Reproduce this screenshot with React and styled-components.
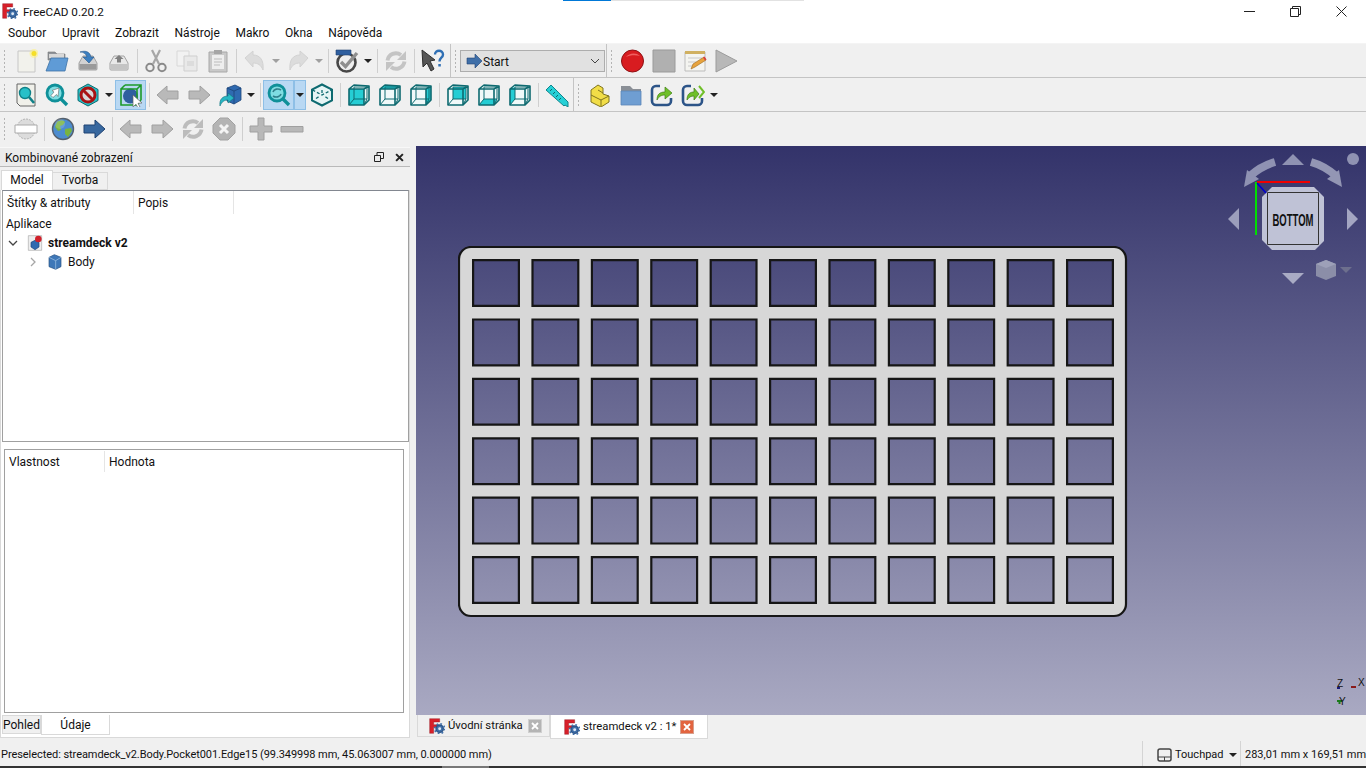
import React from 'react';
import styled, { createGlobalStyle } from 'styled-components';

const GlobalStyle = createGlobalStyle`
  html, body { margin: 0; padding: 0; background: #f0f0f0; overflow: hidden; }
  * { box-sizing: border-box; }
`;

const Window = styled.div`
  position: relative;
  width: 1366px;
  height: 768px;
  display: flex;
  flex-direction: column;
  overflow: hidden;
  background: #f0f0f0;
  color: #111;
  font-family: Roboto, "Open Sans", sans-serif;
  font-size: 12px;
  white-space: nowrap;
`;

const TaskSliver = styled.div`
  position: absolute;
  top: 0;
  left: ${p => p.$left}px;
  width: ${p => p.$width}px;
  height: 1px;
  background: ${p => p.$color};
`;

const TitleBar = styled.div`
  height: 22px;
  flex: none;
  display: flex;
  align-items: center;
  background: #fff;
  padding-left: 2px;
  padding-right: 2px;
`;

const TitleText = styled.span`
  margin-left: 5px;
  margin-top: 1px;
  flex: 1;
  font-size: 11.7px;
`;

const WinButton = styled.div`
  width: 46px;
  height: 22px;
  display: flex;
  align-items: center;
  justify-content: center;
`;

const MenuBar = styled.div`
  height: 22px;
  flex: none;
  display: flex;
  align-items: center;
  gap: 15.7px;
  padding-left: 8px;
  background: #fff;
  border-bottom: 1px solid #f4f4f4;
`;

const MenuItem = styled.span`
  font-size: 12px;
`;

const ToolRow = styled.div`
  height: ${p => p.$height || 34}px;
  flex: none;
  display: flex;
  align-items: center;
  background: #f0f0f0;
  border-bottom: ${p => (p.$flat ? 'none' : '1px solid #c4c4c4')};
`;

const ToolGroup = styled.div`
  display: flex;
  align-items: center;
  height: 100%;
  width: ${p => (p.$width ? `${p.$width}px` : 'auto')};
  border-right: ${p => (p.$edge ? '1px solid #c4c4c4' : 'none')};
`;

const Grip = styled.div`
  width: 10px;
  height: 24px;
  flex: none;
  background-image: radial-gradient(circle, #b4b4b4 1px, transparent 1.1px);
  background-size: 3px 4px;
  background-repeat: repeat-y;
  background-position: 3px 0;
`;

const ToolButton = styled.div`
  width: 31px;
  height: 30px;
  flex: none;
  display: flex;
  align-items: center;
  justify-content: center;
  background: ${p => (p.$active ? '#b9d8f3' : 'transparent')};
  outline: ${p => (p.$active ? '1px solid #8ebfe6' : 'none')};
  outline-offset: -1px;
`;

const DropArrow = styled.div`
  width: 12px;
  height: 30px;
  flex: none;
  display: flex;
  align-items: center;
  justify-content: center;
  background: ${p => (p.$active ? '#b9d8f3' : 'transparent')};
  outline: ${p => (p.$active ? '1px solid #8ebfe6' : 'none')};
  outline-offset: -1px;
  &::after {
    content: '';
    border-left: 4px solid transparent;
    border-right: 4px solid transparent;
    border-top: 4px solid ${p => (p.$muted ? '#a0a0a0' : '#222')};
  }
`;

const ToolSep = styled.div`
  width: 6px;
  height: 24px;
  flex: none;
  display: flex;
  justify-content: center;
  &::after {
    content: '';
    width: 1px;
    background: #cfcfcf;
  }
`;

const Combo = styled.div`
  width: 145px;
  height: 22px;
  flex: none;
  display: flex;
  align-items: center;
  gap: 1px;
  margin-left: -1px;
  padding: 0 4px 0 5px;
  background: #e1e1e1;
  border: 1px solid #adadad;
`;

const ComboLabel = styled.span`
  flex: 1;
  padding-top: 2px;
`;

const Main = styled.div`
  flex: 1;
  min-height: 0;
  display: flex;
`;

const Dock = styled.div`
  width: 416px;
  flex: none;
  display: flex;
  flex-direction: column;
  padding-top: 2px;
`;

const DockTitle = styled.div`
  height: 20px;
  flex: none;
  width: 410px;
  display: flex;
  align-items: center;
  padding: 0 0 0 5px;
  background: #ebebeb;
  border-top: 1px solid #f8f8f8;
  border-bottom: 1px solid #b9b9b9;
`;

const DockLabel = styled.span`
  flex: 1;
  padding-top: 2px;
`;

const DockTool = styled.div`
  width: 21px;
  height: 16px;
  display: flex;
  align-items: center;
  justify-content: center;
`;

const TabStrip = styled.div`
  display: flex;
  align-items: flex-end;
  height: ${p => p.$height}px;
  flex: none;
  padding-left: ${p => p.$pad || 0}px;
`;

const DockTab = styled.div`
  width: ${p => p.$width}px;
  height: ${p => (p.$active ? 20 : 18)}px;
  display: flex;
  align-items: center;
  justify-content: center;
  padding-bottom: 2px;
  background: ${p => (p.$active ? '#fff' : '#f0f0f0')};
  border: 1px solid #d9d9d9;
  border-bottom: ${p => (p.$active ? 'none' : '1px solid #d9d9d9')};
  border-left: ${p => (p.$first ? '1px solid #d9d9d9' : 'none')};
`;

const DockBody = styled.div`
  width: 410px;
  height: 548px;
  flex: none;
  display: flex;
  flex-direction: column;
  background: #fff;
  border: 1px solid #d9d9d9;
  border-top: none;
  padding: 0 2px;
`;

const TreePanel = styled.div`
  height: 252px;
  flex: none;
  margin-left: -1px;
  width: 407px;
  background: #fff;
  border: 1px solid #a0a0a0;
  border-top-color: #828790;
`;

const ColumnHead = styled.div`
  height: ${p => p.$height}px;
  display: flex;
  align-items: center;
`;

const ColumnCell = styled.div`
  width: ${p => p.$width}px;
  height: 100%;
  display: flex;
  align-items: center;
  padding-left: ${p => p.$pad}px;
  border-right: ${p => (p.$last ? 'none' : '1px solid #e5e5e5')};
`;

const TreeRow = styled.div`
  height: ${p => p.$height || 20}px;
  display: flex;
  align-items: center;
  padding-left: ${p => p.$indent}px;
  gap: 5px;
  font-weight: ${p => (p.$bold ? 700 : 400)};
`;

const ChevronSlot = styled.div`
  width: 19px;
  display: flex;
  align-items: center;
  margin-right: -5px;
  padding-right: 5px;
`;

const PropertyPanel = styled.div`
  flex: 1;
  margin: 7px 3px 0 1px;
  background: #fff;
  border: 1px solid #a0a0a0;
  padding-top: 1px;
`;

const BottomTabs = styled.div`
  display: flex;
  align-items: flex-start;
  height: 24px;
  flex: none;
  padding-top: 2px;
  margin-left: -1px;
`;

const LowerTab = styled.div`
  width: ${p => p.$width}px;
  height: ${p => (p.$active ? 20 : 19)}px;
  display: flex;
  align-items: center;
  justify-content: center;
  background: ${p => (p.$active ? '#fff' : '#f0f0f0')};
  border: 1px solid #d9d9d9;
  border-top: ${p => (p.$active ? 'none' : '1px solid #d9d9d9')};
`;

const ViewColumn = styled.div`
  flex: 1;
  min-width: 0;
  display: flex;
  flex-direction: column;
  padding-top: 1px;
`;

const Viewport = styled.div`
  position: relative;
  height: 569px;
  flex: none;
  padding: 100px 0 0 42px;
  background: linear-gradient(180deg, #33336a 0%, #a9a9c2 100%);
`;

const NavCube = styled.svg`
  position: absolute;
  top: 0;
  right: 0;
`;

const AxisCross = styled.svg`
  position: absolute;
  right: 0;
  bottom: 0;
`;

const ViewTabs = styled.div`
  height: 24px;
  flex: none;
  display: flex;
  align-items: flex-start;
  padding-left: 1px;
`;

const ViewTab = styled.div`
  width: ${p => p.$width}px;
  height: ${p => (p.$active ? 24 : 22)}px;
  display: flex;
  align-items: center;
  gap: 3px;
  padding-left: ${p => p.$pad}px;
  font-size: 11.3px;
  background: ${p => (p.$active ? '#fff' : '#f0f0f0')};
  border-right: 1px solid #d9d9d9;
  border-bottom: 1px solid #d9d9d9;
  border-left: 1px solid #d9d9d9;
`;

const CloseBox = styled.div`
  width: 14px;
  height: 14px;
  margin-left: ${p => p.$left}px;
  display: flex;
  align-items: center;
  justify-content: center;
  background: ${p => (p.$active ? '#e2643f' : '#b4b4b4')};
  border: 1px solid ${p => (p.$active ? '#d8a08e' : '#d0d0d0')};
`;

const StatusBar = styled.div`
  height: 27px;
  flex: none;
  display: flex;
  align-items: stretch;
  padding-top: 2px;
  font-size: 11px;
`;

const StatusMessage = styled.div`
  flex: 1;
  display: flex;
  align-items: center;
  padding: 2px 0 0 1px;
  letter-spacing: -0.06px;
`;

const StatusCell = styled.div`
  width: ${p => p.$width}px;
  display: flex;
  align-items: center;
  gap: ${p => p.$gap || 0}px;
  padding-top: 2px;
  padding-left: ${p => p.$pad}px;
  border-left: 1px solid #d4d4d4;
`;

const StatusArrow = styled.span`
  margin-left: 2px;
  border-left: 4px solid transparent;
  border-right: 4px solid transparent;
  border-top: 4px solid #222;
`;

const BottomEdge = styled.div`
  height: 2px;
  flex: none;
  background: linear-gradient(90deg, #333 0 442px, #777 442px 489px, #333 489px);
`;

const Svg = ({ size = 24, children }) => (
  <svg width={size} height={size} viewBox="0 0 24 24" fill="none">{children}</svg>
);

const Logo = ({ size = 16 }) => (
  <Svg size={size}>
    <path d="M1 1h15v5H7v4h7v4H7v9H1z" fill="#d8202a" stroke="#8c1018" strokeWidth=".6" />
    <circle cx="16" cy="16" r="5.5" fill="#3f6fa8" stroke="#2c5488" strokeWidth="2" />
    <circle cx="16" cy="16" r="7.5" stroke="#3f6fa8" strokeWidth="2.4" strokeDasharray="2.6 3.3" />
    <circle cx="16" cy="16" r="2.2" fill="#dfe8f2" />
  </Svg>
);

const Arrow = ({ dir = 'left', fill = '#b9b9b9', stroke = '#a0a0a0' }) => (
  <Svg>
    <path
      d={dir === 'left' ? 'M1 12 11 3v5h11v8H11v5z' : 'M23 12 13 3v5H2v8h11v5z'}
      fill={fill}
      stroke={stroke}
    />
  </Svg>
);

const boxFaces = {
  front: '2,6 17,6 17,22 2,22',
  top: '2,6 7,2 22,3 17,6',
  right: '17,6 22,3 22,17 17,22',
  rear: '7,4 20,4 20,16 7,16',
  bottom: '2,22 7,16 20,16 17,22',
  left: '2,6 7,4 7,16 2,22',
};

const ViewBox = ({ face }) => (
  <Svg>
    <path d="M2 6l5-4 15 1v14l-5 5H2z" fill="#f0f9f9" />
    <polygon points={boxFaces[face]} fill="#25cdd4" />
    <g stroke="#0e6a70" strokeWidth="1.6" strokeLinejoin="round">
      <path d="M2 6l5-4 15 1v14l-5 5H2zM2 6h15v16M17 6l5-3" />
      <path d="M7 4h13v12H7zM7 16l-5 6M20 16l-3 6" strokeWidth="1" />
    </g>
  </Svg>
);

const IsoBox = () => (
  <Svg>
    <path d="M12 1.500l10 5.200v10.600L12 22.500 2 17.300V6.700z" fill="#e6f5f5" stroke="#0e6a70" strokeWidth="2" />
    <path d="M12 7v5M6 15.500l4-2.500M18 15.500l-4-2.500M2.500 7L12 12l9.500-5" stroke="#0e6a70" strokeWidth="1.300" strokeDasharray="3 2" />
  </Svg>
);

const Drive = ({ up }) => (
  <Svg>
    <path d="M3 14 7 7h10l4 7v6a1 1 0 0 1-1 1H4a1 1 0 0 1-1-1z" fill={up ? '#e8e8e8' : '#d2d2d2'} stroke="#a2a2a2" />
    <path d="M3.500 15h17v5.500h-17z" fill={up ? '#c4c4c4' : '#9a9a9a'} />
    {up
      ? <path d="M12 6l-4.500 4H10v3.500h4V10h2.500z" fill="#808080" />
      : <path d="M4 3c6-2 10 0 11 5h3l-5 6-6-6h4c-1-3-3-5-7-5z" fill="#3c7fc0" stroke="#27588c" strokeWidth=".6" />}
  </Svg>
);

const Icons = {
  newFile: () => (
    <Svg>
      <path d="M4 2h17v21H4z" fill="#f2f2ec" stroke="#c6c6c6" />
      <circle cx="20" cy="4.500" r="4.500" fill="#fff27a" opacity=".55" />
      <circle cx="20" cy="4.500" r="2.500" fill="#f5df2a" />
    </Svg>
  ),
  open: () => (
    <Svg>
      <path d="M3 3h7l2 2h8v6H3z" fill="#8f9399" stroke="#777" strokeWidth=".6" />
      <path d="M4 5h15v4H4z" fill="#d8d8d8" />
      <path d="M6 9h17l-3 13H1z" fill="#5f9bd6" stroke="#3e72a6" strokeWidth=".8" />
    </Svg>
  ),
  save: () => <Drive />,
  saveAs: () => <Drive up />,
  cut: () => (
    <Svg>
      <path d="M8 1l7 14M16 1 9 15" stroke="#a6a6a6" strokeWidth="2.200" />
      <circle cx="6" cy="18.500" r="3.700" stroke="#8a8a8a" strokeWidth="2" />
      <circle cx="18" cy="18.500" r="3.700" stroke="#8a8a8a" strokeWidth="2" />
    </Svg>
  ),
  copy: () => (
    <Svg>
      <path d="M2 2h12v15H2z" fill="#f2f2f2" stroke="#d8d8d8" />
      <path d="M9 7h13v15H9z" fill="#e9e9e9" stroke="#cfcfcf" />
      <path d="M12 12h7v5h-7z" fill="#dcdcdc" />
    </Svg>
  ),
  paste: () => (
    <Svg>
      <path d="M3 3h18v20H3z" fill="#c9c9c9" stroke="#a8a8a8" />
      <path d="M6 6h12v14H6z" fill="#eee" />
      <path d="M8 1h8v4H8z" fill="#a6a6a6" />
      <path d="M8 10h8M8 13h8M8 16h6" stroke="#bcbcbc" />
    </Svg>
  ),
  undo: () => (
    <Svg>
      <path d="M2 9l8-7v4c7 0 11 5 10 15-2-5-5-7-10-7v4z" fill="#dcdcdc" stroke="#d2d2d2" />
    </Svg>
  ),
  redo: () => (
    <Svg>
      <path d="M22 9l-8-7v4C7 6 3 11 4 21c2-5 5-7 10-7v4z" fill="#dcdcdc" stroke="#d2d2d2" />
    </Svg>
  ),
  workbench: () => (
    <Svg>
      <circle cx="11.500" cy="13.500" r="9" fill="#efefef" stroke="#474747" strokeWidth="2.600" />
      <path d="M1 1h15v5H1z" fill="#2f5f9f" stroke="#1e3f6e" strokeWidth=".6" />
      <path d="M6 13l4.500 4.500L22 4" stroke="#8f8f8f" strokeWidth="3.400" />
    </Svg>
  ),
  refresh: ({ color = '#c4c4c4' }) => (
    <Svg>
      <path d="M3.500 11.500A8.500 8.500 0 0 1 17 6" stroke={color} strokeWidth="4" />
      <path d="M22 2v9h-9z" fill={color} />
      <path d="M20.500 12.500A8.500 8.500 0 0 1 7 18" stroke={color} strokeWidth="4" />
      <path d="M2 22v-9h9z" fill={color} />
    </Svg>
  ),
  help: () => (
    <Svg>
      <path d="M1 1l13 10-5 1 4 8-3 2-4-8-4 4z" fill="#565656" stroke="#2e2e2e" />
      <path d="M14 5.500c0-5 8-5 8 0 0 3.500-3.500 3-3.500 7" stroke="#2f6fb4" strokeWidth="2.400" />
      <path d="M17.300 15h2.500v2.500h-2.500z" fill="#2f6fb4" />
    </Svg>
  ),
  fitAll: () => (
    <Svg>
      <path d="M3 1h18v22H6l-3-3z" fill="#f0f0ea" stroke="#666" />
      <circle cx="11" cy="10" r="5.500" fill="#27c0c8" stroke="#0f8088" strokeWidth="1.400" />
      <path d="M15 14l5 6" stroke="#0f8088" strokeWidth="2.600" />
    </Svg>
  ),
  fitSelection: () => (
    <Svg>
      <circle cx="10" cy="10" r="8" fill="#7fdde2" stroke="#0f9099" strokeWidth="2.800" />
      <path d="M15.500 15.500l6.500 6.500" stroke="#0f9099" strokeWidth="3.400" />
      <path d="M14 5l-7 2.500 2 1.500-3 3.500 2 2 3.500-3 1.500 2z" fill="#fff" stroke="#666" strokeWidth=".6" />
    </Svg>
  ),
  drawStyle: () => (
    <Svg>
      <path d="M12 1l10 5.500v11L12 23 2 17.500v-11z" fill="#25c4cb" stroke="#0e6a70" />
      <circle cx="12" cy="12" r="7" fill="#d8d8d8" stroke="#a81414" strokeWidth="3" />
      <path d="M7 7l10 10" stroke="#a81414" strokeWidth="3" />
    </Svg>
  ),
  selection: () => (
    <Svg>
      <circle cx="11.500" cy="13" r="7.500" fill="#2f5f9f" />
      <path d="M2 6h16v16H2zM6 2h16v15M2 6l4-4M18 6l4-4M18 22l4-5" stroke="#1d9a2a" strokeWidth="1.600" />
      <path d="M14 12l9 8-4 .3 2 3.700-2 1-2-3.700-3 2.500z" fill="#fff" stroke="#666" strokeWidth=".7" />
    </Svg>
  ),
  sync: () => (
    <Svg>
      <path d="M9 5l8-3 6 3v12l-7 4-7-3z" fill="#2f6ab0" stroke="#1c4478" strokeWidth=".8" />
      <path d="M16 8v13M9 5l7 3 7-3" stroke="#1c4478" strokeWidth=".8" />
      <path d="M2 23c-1-7 3-10 8-10v-3l6 5-6 5v-3c-3 0-6 1-8 6z" fill="#27b7c4" stroke="#12717a" strokeWidth=".6" />
    </Svg>
  ),
  zoomBox: () => (
    <Svg>
      <circle cx="10" cy="10" r="8" fill="#7fdde2" stroke="#0f9099" strokeWidth="2.800" />
      <path d="M15.500 15.500l6.500 6.500" stroke="#0f9099" strokeWidth="3.400" />
      <path d="M6 9c1-3 5-4 8-2M14 11c-1 3-5 4-8 2" stroke="#2f7f8a" strokeWidth="1.600" />
    </Svg>
  ),
  ruler: () => (
    <Svg>
      <path d="M1 7l5-5 17 17v5l-3-2-1 1z" fill="#25d0d6" stroke="#10858c" />
      <path d="M5 8l2-2M8 11l2-2M11 14l2-2M14 17l2-2" stroke="#0e6a70" />
    </Svg>
  ),
  part: () => (
    <Svg>
      <path d="M3 7l7-5 5 3v6l6 2v6l-8 5-10-5z" fill="#f1dd47" stroke="#7f7420" />
      <path d="M3 12l10 5 8-4M13 17v6M10 7l5 3" stroke="#7f7420" />
    </Svg>
  ),
  folder: () => (
    <Svg>
      <path d="M2 3h9l3 3h8v16H2z" fill="#8a8f96" />
      <path d="M2 8h20v14H2z" fill="#6f9ed2" stroke="#5c87b8" strokeWidth=".8" />
    </Svg>
  ),
  link: ({ double }) => (
    <Svg>
      <path d="M10 3H6a4 4 0 0 0-4 4v11a4 4 0 0 0 4 4h11a4 4 0 0 0 4-4v-3" stroke="#2c5488" strokeWidth="2.600" />
      <path d={double ? 'M6 17c0-6 3-8 7-8V5l5 6-5 6v-4c-3 0-5 1-7 4z' : 'M7 17c0-6 3-8 8-8V4l7 6-7 6v-4c-3 0-6 1-8 5z'} fill="#6fbf28" stroke="#3f7f14" strokeWidth=".7" />
      {double && <path d="M18 3l5 6-5 6" stroke="#6fbf28" strokeWidth="2" />}
    </Svg>
  ),
  bookmark: () => (
    <Svg>
      <path d="M3 12c0-6 4-10 9-10s9 4 9 10-4 10-9 10-9-4-9-10z" fill="#dcdcdc" stroke="#b4b4b4" strokeDasharray="2 1" />
      <path d="M1 8h22v8H1z" fill="#fff" stroke="#aaa" />
    </Svg>
  ),
  globe: () => (
    <Svg>
      <circle cx="12" cy="12" r="10.500" fill="#4c8ccf" stroke="#55606c" strokeWidth="1.400" />
      <path d="M6 5c3-2 7-2 8 0l-2 3-3 1 1 4-3 1-3-4zM14 12l6-1 1 3-4 6-3-3z" fill="#79b340" />
      <circle cx="9" cy="7" r="5" fill="#fff" opacity=".16" />
    </Svg>
  ),
  forward: () => <Arrow dir="right" fill="#38689f" stroke="#1f4272" />,
  stopWeb: () => (
    <Svg>
      <path d="M8 1h8l7 7v8l-7 7H8l-7-7V8z" fill="#b4b4b4" stroke="#a2a2a2" />
      <path d="M8 8l8 8M16 8l-8 8" stroke="#f4f4f4" strokeWidth="3" />
    </Svg>
  ),
  plus: () => (
    <Svg>
      <path d="M9 1h6v8h8v6h-8v8H9v-8H1V9h8z" fill="#b8b8b8" stroke="#a0a0a0" />
    </Svg>
  ),
  minus: () => (
    <Svg>
      <path d="M1 9.500h22v5.500H1z" fill="#b8b8b8" stroke="#a0a0a0" />
    </Svg>
  ),
  record: () => (
    <Svg>
      <circle cx="11.500" cy="12" r="11" fill="#d81c20" stroke="#8e1014" />
      <path d="M5 8c3-4 10-5 14-1-4-1-10-1-14 1z" fill="#f06060" />
    </Svg>
  ),
  stop: () => (
    <Svg>
      <path d="M1 1h22v22H1z" fill="#b0b0b0" stroke="#9a9a9a" />
    </Svg>
  ),
  macro: () => (
    <Svg>
      <path d="M2 3h20v19H2z" fill="#f4f4f0" stroke="#bcbcbc" />
      <path d="M2 2h20v3H2z" fill="#d0b060" />
      <path d="M5 9h14M5 13h8M5 17h6" stroke="#c8c8c8" />
      <path d="M8 20l2-5 11-7 2 3-11 7z" fill="#e8a33c" stroke="#9a6a20" strokeWidth=".6" />
      <path d="M20 8.500l1.500-1 2 3-1.500 1z" fill="#d94040" />
    </Svg>
  ),
  play: () => (
    <Svg>
      <path d="M2 1l21 11L2 23z" fill="#b8b8b8" stroke="#9c9c9c" />
    </Svg>
  ),
};

const Tool = ({ icon: Icon, active, ...rest }) => (
  <ToolButton $active={active}><Icon {...rest} /></ToolButton>
);

const holeColumns = Array.from({ length: 11 }, (_, i) => i);
const holeRows = Array.from({ length: 6 }, (_, i) => i);

const platePath = () => {
  const outer = 'M13 1H656a12 12 0 0 1 12 12V358a12 12 0 0 1-12 12H13a12 12 0 0 1-12-12V13a12 12 0 0 1 12-12z';
  const holes = holeRows.flatMap(r => holeColumns.map(c => {
    const x = 15.100 + c * 59.4;
    const y = 14.100 + r * 59.4;
    return `M${x} ${y}h45.800v45.800h-45.800z`;
  }));
  return [outer, ...holes].join('');
};

const PlateSvg = styled.svg`
  display: block;
`;

const Plate = () => (
  <PlateSvg width="670" height="372">
    <path d={platePath()} fillRule="evenodd" fill="#d7d7d7" stroke="#161616" strokeWidth="2.200" />
  </PlateSvg>
);

const CubeNavigator = () => (
  <NavCube width="166" height="160" viewBox="1200 146 166 160">
    <g fill="#8f92b2">
      <path d="M1282 165l11-11 11 11z" />
      <path d="M1282 273l11 11 11-11z" fill="#a9abc4" />
      <path d="M1239 208v22l-11-11z" fill="#9c9ebc" />
      <path d="M1347 208v22l11-11z" fill="#a4a6c2" />
      <path d="M1275 162q-14 4-25 14" fill="none" stroke="#8f92b2" strokeWidth="8" />
      <path d="M1244 187l3-17 12 9z" />
      <path d="M1311 162q14 4 25 14" fill="none" stroke="#9396b4" strokeWidth="8" />
      <path d="M1342 187l-3-17-12 9z" fill="#9396b4" />
      <circle cx="1353" cy="159" r="6" />
    </g>
    <path d="M1272 187h42l10 10v44l-9 9h-43l-10-10v-43z" fill="#bfc2d6" />
    <path d="M1267.500 192.500h51v52h-51z" fill="none" stroke="#333" strokeWidth="1" />
    <text x="1293" y="226" textAnchor="middle" fontFamily="'Liberation Sans', sans-serif" fontWeight="700" fontSize="17" textLength="41" lengthAdjust="spacingAndGlyphs" fill="#111">BOTTOM</text>
    <path d="M1257 182h53" stroke="#f00000" strokeWidth="2" />
    <path d="M1256 182v53" stroke="#00e000" strokeWidth="2" />
    <path d="M1257 183l9 10" stroke="#0000d0" strokeWidth="1.600" />
    <path d="M1326 260l10 4v12l-10 4-10-4v-12z" fill="#8b8ea8" />
    <path d="M1316 264l10 4 10-4-10-4z" fill="#9da0b8" />
    <path d="M1340 267h12l-6 6z" fill="#6d6f8d" />
  </NavCube>
);

const Axes = () => (
  <AxisCross width="40" height="40" viewBox="1326 675 40 40">
    <path d="M1337 688h3" stroke="#1a1a7a" strokeWidth="2" />
    <path d="M1351 687h5" stroke="#8a1a1a" strokeWidth="2" />
    <path d="M1337 701h5M1339.500 701v3" stroke="#1a7a1a" strokeWidth="2" />
    <g fontFamily="'Liberation Sans', sans-serif" fontSize="10" fill="#111">
      <text x="1337" y="687">Z</text>
      <text x="1358" y="686">X</text>
      <text x="1339" y="705">Y</text>
    </g>
  </AxisCross>
);

const Cross = ({ color = '#fff', size = 8 }) => (
  <svg width={size} height={size} viewBox="0 0 8 8">
    <path d="M1 1l6 6M7 1 1 7" stroke={color} strokeWidth="1.800" />
  </svg>
);

const DocIcon = () => (
  <Svg size={16}>
    <path d="M2 1h20v22H2z" fill="#eee" stroke="#aaa" />
    <path d="M6 11l6-3 6 3v7l-6 4-6-4z" fill="#2f6ab0" stroke="#1c4478" />
    <circle cx="17" cy="6" r="5" fill="#d0202a" />
  </Svg>
);

const BodyIcon = () => (
  <Svg size={16}>
    <path d="M3 5l8-4 10 4v14l-8 4-10-4z" fill="#3f78b8" stroke="#244e80" />
    <path d="M3 5l10 5v13M13 10l8-5" stroke="#a8c8e8" />
  </Svg>
);

const Chevron = ({ open }) => (
  <svg width="10" height="10" viewBox="0 0 10 10" fill="none">
    <path d={open ? 'M1 3l4 4 4-4' : 'M3 1l4 4-4 4'} stroke={open ? '#444' : '#a6a6a6'} strokeWidth="1.300" />
  </svg>
);

export default function App() {
  return (
    <Window>
      <GlobalStyle />
      <TaskSliver $left={563} $width={48} $color="#0078d7" />
      <TaskSliver $left={611} $width={193} $color="#e2e2e2" />

      <TitleBar>
        <Logo />
        <TitleText>FreeCAD 0.20.2</TitleText>
        <WinButton><svg width="11" height="11"><path d="M0 5.500h11" stroke="#222" /></svg></WinButton>
        <WinButton><svg width="11" height="11" fill="none"><path d="M.5 2.500h8v8h-8zM2.500 2.500v-2h8v8h-2" stroke="#222" /></svg></WinButton>
        <WinButton><svg width="11" height="11"><path d="M.5.500l10 10M10.500.500l-10 10" stroke="#222" /></svg></WinButton>
      </TitleBar>

      <MenuBar>
        {['Soubor', 'Upravit', 'Zobrazit', 'Nástroje', 'Makro', 'Okna', 'Nápověda'].map(m => (
          <MenuItem key={m}>{m}</MenuItem>
        ))}
      </MenuBar>

      <ToolRow>
        <ToolGroup $width={451} $edge>
          <Grip />
          <Tool icon={Icons.newFile} />
          <Tool icon={Icons.open} />
          <Tool icon={Icons.save} />
          <Tool icon={Icons.saveAs} />
          <ToolSep />
          <Tool icon={Icons.cut} />
          <Tool icon={Icons.copy} />
          <Tool icon={Icons.paste} />
          <ToolSep />
          <Tool icon={Icons.undo} />
          <DropArrow $muted />
          <Tool icon={Icons.redo} />
          <DropArrow $muted />
          <ToolSep />
          <Tool icon={Icons.workbench} />
          <DropArrow />
          <ToolSep />
          <Tool icon={Icons.refresh} />
          <ToolSep />
          <Tool icon={Icons.help} />
        </ToolGroup>
        <ToolGroup $width={156} $edge>
          <Grip />
          <Combo>
            <svg width="16" height="14" viewBox="0 0 16 14"><path d="M1 4h8V0l7 7-7 7v-4H1z" fill="#3f6fa8" stroke="#1f4272" strokeWidth=".6" /></svg>
            <ComboLabel>Start</ComboLabel>
            <svg width="10" height="6" fill="none"><path d="M1 1l4 4 4-4" stroke="#444" /></svg>
          </Combo>
        </ToolGroup>
        <ToolGroup>
          <Grip />
          <Tool icon={Icons.record} />
          <Tool icon={Icons.stop} />
          <Tool icon={Icons.macro} />
          <Tool icon={Icons.play} />
        </ToolGroup>
      </ToolRow>

      <ToolRow>
        <ToolGroup $width={574} $edge>
          <Grip />
          <Tool icon={Icons.fitAll} />
          <Tool icon={Icons.fitSelection} />
          <Tool icon={Icons.drawStyle} />
          <DropArrow />
          <Tool icon={Icons.selection} active />
          <ToolSep />
          <Tool icon={Arrow} dir="left" />
          <Tool icon={Arrow} dir="right" />
          <Tool icon={Icons.sync} />
          <DropArrow />
          <ToolSep />
          <Tool icon={Icons.zoomBox} active />
          <DropArrow $active />
          <Tool icon={IsoBox} />
          <ToolSep />
          <Tool icon={ViewBox} face="front" />
          <Tool icon={ViewBox} face="top" />
          <Tool icon={ViewBox} face="right" />
          <ToolSep />
          <Tool icon={ViewBox} face="rear" />
          <Tool icon={ViewBox} face="bottom" />
          <Tool icon={ViewBox} face="left" />
          <ToolSep />
          <Tool icon={Icons.ruler} />
        </ToolGroup>
        <ToolGroup>
          <Grip />
          <Tool icon={Icons.part} />
          <Tool icon={Icons.folder} />
          <Tool icon={Icons.link} />
          <Tool icon={Icons.link} double />
          <DropArrow />
        </ToolGroup>
      </ToolRow>

      <ToolRow $height={33} $flat>
        <Grip />
        <Tool icon={Icons.bookmark} />
        <ToolSep />
        <Tool icon={Icons.globe} />
        <Tool icon={Icons.forward} />
        <ToolSep />
        <Tool icon={Arrow} dir="left" />
        <Tool icon={Arrow} dir="right" />
        <Tool icon={Icons.refresh} color="#bcbcbc" />
        <Tool icon={Icons.stopWeb} />
        <ToolSep />
        <Tool icon={Icons.plus} />
        <Tool icon={Icons.minus} />
      </ToolRow>

      <Main>
        <Dock>
          <DockTitle>
            <DockLabel>Kombinované zobrazení</DockLabel>
            <DockTool>
              <svg width="10" height="10" fill="none"><path d="M.5 3.500h6v6h-6zM3 3.500v-3h6.500v6H7" stroke="#222" /></svg>
            </DockTool>
            <DockTool><Cross color="#222" size={9} /></DockTool>
          </DockTitle>
          <TabStrip $height={23} $pad={1}>
            <DockTab $width={52} $active $first>Model</DockTab>
            <DockTab $width={55}>Tvorba</DockTab>
          </TabStrip>
          <DockBody>
            <TreePanel>
              <ColumnHead $height={23}>
                <ColumnCell $width={131} $pad={4}>Štítky &amp; atributy</ColumnCell>
                <ColumnCell $width={100} $pad={4}>Popis</ColumnCell>
              </ColumnHead>
              <TreeRow $indent={3} $height={19}>Aplikace</TreeRow>
              <TreeRow $indent={5} $bold $height={19}>
                <ChevronSlot><Chevron open /></ChevronSlot>
                <DocIcon />
                <span>streamdeck v2</span>
              </TreeRow>
              <TreeRow $indent={25}>
                <ChevronSlot><Chevron /></ChevronSlot>
                <BodyIcon />
                <span>Body</span>
              </TreeRow>
            </TreePanel>
            <PropertyPanel>
              <ColumnHead $height={21}>
                <ColumnCell $width={100} $pad={4}>Vlastnost</ColumnCell>
                <ColumnCell $width={100} $pad={4} $last>Hodnota</ColumnCell>
              </ColumnHead>
            </PropertyPanel>
            <BottomTabs>
              <LowerTab $width={39}>Pohled</LowerTab>
              <LowerTab $width={69} $active>Údaje</LowerTab>
            </BottomTabs>
          </DockBody>
        </Dock>

        <ViewColumn>
          <Viewport>
            <Plate />
            <CubeNavigator />
            <Axes />
          </Viewport>
          <ViewTabs>
            <ViewTab $width={133} $pad={11}>
              <Logo />
              <span>Úvodní stránka</span>
              <CloseBox $left={2}><Cross /></CloseBox>
            </ViewTab>
            <ViewTab $width={158} $pad={13} $active>
              <Logo />
              <span>streamdeck v2 : 1*</span>
              <CloseBox $active $left={1}><Cross /></CloseBox>
            </ViewTab>
          </ViewTabs>
        </ViewColumn>
      </Main>

      <StatusBar>
        <StatusMessage>Preselected: streamdeck_v2.Body.Pocket001.Edge15 (99.349998 mm, 45.063007 mm, 0.000000 mm)</StatusMessage>
        <StatusCell $width={98} $pad={14} $gap={3}>
          <svg width="15" height="14" viewBox="0 0 15 14" fill="none">
            <rect x="1" y="1" width="13" height="12" rx="2" stroke="#444" strokeWidth="1.500" />
            <path d="M1 9h13M7.500 9v4" stroke="#444" />
          </svg>
          Touchpad
          <StatusArrow />
        </StatusCell>
        <StatusCell $width={126} $pad={4}>283,01 mm x 169,51 mm</StatusCell>
      </StatusBar>
      <BottomEdge />
    </Window>
  );
}
